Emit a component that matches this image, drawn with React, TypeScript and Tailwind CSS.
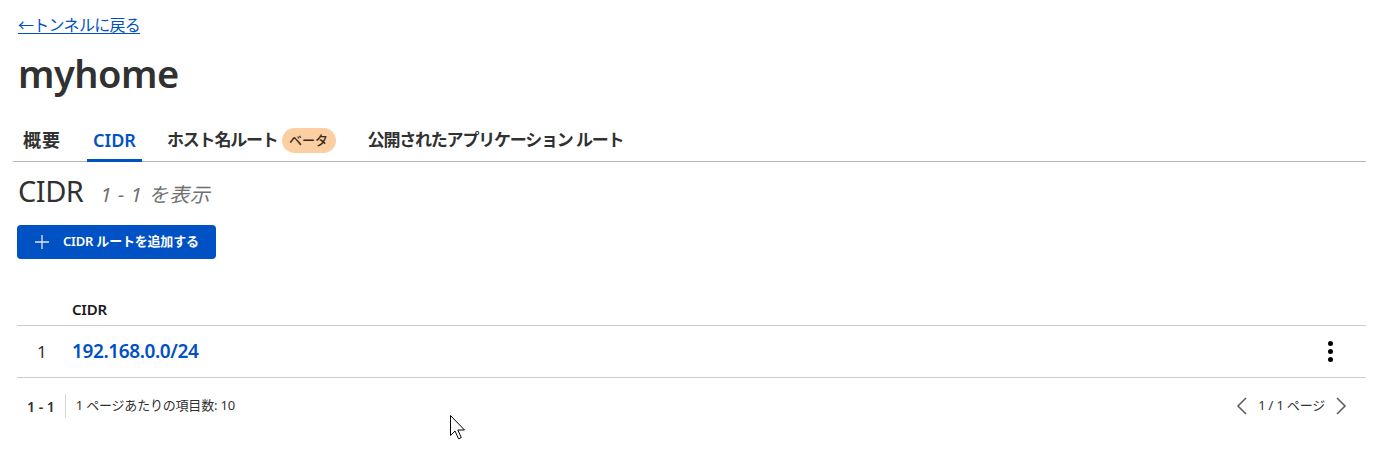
import React from "react";

const font = { fontFamily: '"Noto Sans", "Noto Sans CJK JP", sans-serif' };

function Cursor() {
  return (
    <svg width="20" height="28" viewBox="0 0 20 28" className="absolute left-[449px] top-[414px]">
      <path d="M1.5 1.5 L1.5 21.5 L6 17 L9.6 24.8 L12.3 23.6 L8.8 16 L15.5 16 Z" fill="white" stroke="black" strokeWidth="1" strokeLinejoin="miter" />
    </svg>
  );
}

export default function App() {
  return (
    <div className="relative w-[1387px] h-[459px] bg-white text-[#313131]" style={font}>
      <div className="pl-[17px] pr-[21px] pt-[13px]">
        <a href="#" className="text-[16px] leading-[24px] text-[#0051c3] underline underline-offset-2 ml-[1px] tracking-[-0.7px]">
          ←トンネルに戻る
        </a>
        <h1 className="mt-[13px] text-[38px] leading-[46px] font-semibold text-[#313131] ml-[1px] tracking-[-0.5px]">myhome</h1>

        <div className="mt-[21px] -ml-[4px] flex items-end border-b border-[#b6b6b6] h-[45px]">
          <div className="w-[74px] pl-[10px] pb-[8px] text-[18px] leading-[26px] font-semibold text-[#313131] tracking-[1px]">概要</div>
          <div className="w-[55px] text-center pb-[6px] border-b-[3px] border-[#0051c3] -mb-[1px] text-[18px] leading-[26px] font-semibold text-[#0051c3]">CIDR</div>
          <div className="ml-[25px] flex items-center gap-[4px] pb-[8px] text-[17px] leading-[26px] font-semibold text-[#313131]">
            <span className="tracking-[-1.2px]">ホスト名ルート</span>
            <span className="h-[25px] w-[54px] text-center rounded-full bg-[#fccfa2] text-[13px] leading-[25px] font-medium text-[#3a2a1a]">ベータ</span>
          </div>
          <div className="ml-[32px] pb-[8px] text-[17px] leading-[26px] font-semibold text-[#313131] tracking-[-1.2px]">公開されたアプリケーション ルート</div>
        </div>

        <div className="mt-[11px] flex items-baseline gap-[17px] ml-[1px]">
          <h2 className="text-[29px] leading-[36px] font-normal text-[#313131] tracking-[-0.5px]">CIDR</h2>
          <span className="text-[20px] italic text-[#707070] tracking-[0.7px]">1 - 1 を表示</span>
        </div>

        <button className="mt-[15px] flex items-center h-[34px] w-[199px] rounded-[4px] bg-[#0051c3] text-white pl-[17px]">
          <svg width="16" height="16" viewBox="0 0 16 16" className="mr-[13px]">
            <path d="M8 1 V15 M1 8 H15" stroke="#dfe6f5" strokeWidth="1.3" />
          </svg>
          <span className="text-[13px] font-semibold tracking-[-0.2px]">CIDR ルートを追加する</span>
        </button>

        <div className="mt-[34px]">
          <div className="flex h-[33px] items-center border-b border-[#cccccc]">
            <div className="w-[55px]" />
            <div className="text-[15px] font-semibold text-[#1a1a1a] tracking-[-0.2px]">CIDR</div>
          </div>
          <div className="flex h-[52px] items-center border-b border-[#cccccc]">
            <div className="w-[55px] pl-[20px] text-[17px] text-[#313131]">1</div>
            <a href="#" className="text-[19px] font-semibold text-[#0051c3] tracking-[-0.4px]">192.168.0.0/24</a>
            <div className="ml-auto mr-[33px] flex flex-col items-center gap-[3px]">
              <span className="block w-[5px] h-[5px] rounded-full bg-black" />
              <span className="block w-[5px] h-[5px] rounded-full bg-black" />
              <span className="block w-[5px] h-[5px] rounded-full bg-black" />
            </div>
          </div>
          <div className="flex items-center h-[56px]">
            <div className="pl-[10px] pr-[10px] text-[14px] font-semibold text-[#313131]">1 - 1</div>
            <div className="w-px h-[24px] bg-[#d5d5d5]" />
            <div className="pl-[10px] text-[13px] text-[#313131] tracking-[-0.2px]">1 ページあたりの項目数: 10</div>
            <div className="ml-auto mr-[19px] flex items-center gap-[10px] text-[13px] text-[#313131]">
              <svg width="12" height="18" viewBox="0 0 12 18"><path d="M10 1 L2 9 L10 17" fill="none" stroke="#5e5e5e" strokeWidth="1.6" /></svg>
              <span className="tracking-[-0.2px]">1 / 1 ページ</span>
              <svg width="12" height="18" viewBox="0 0 12 18"><path d="M2 1 L10 9 L2 17" fill="none" stroke="#5e5e5e" strokeWidth="1.6" /></svg>
            </div>
          </div>
        </div>
      </div>
      <Cursor />
    </div>
  );
}
